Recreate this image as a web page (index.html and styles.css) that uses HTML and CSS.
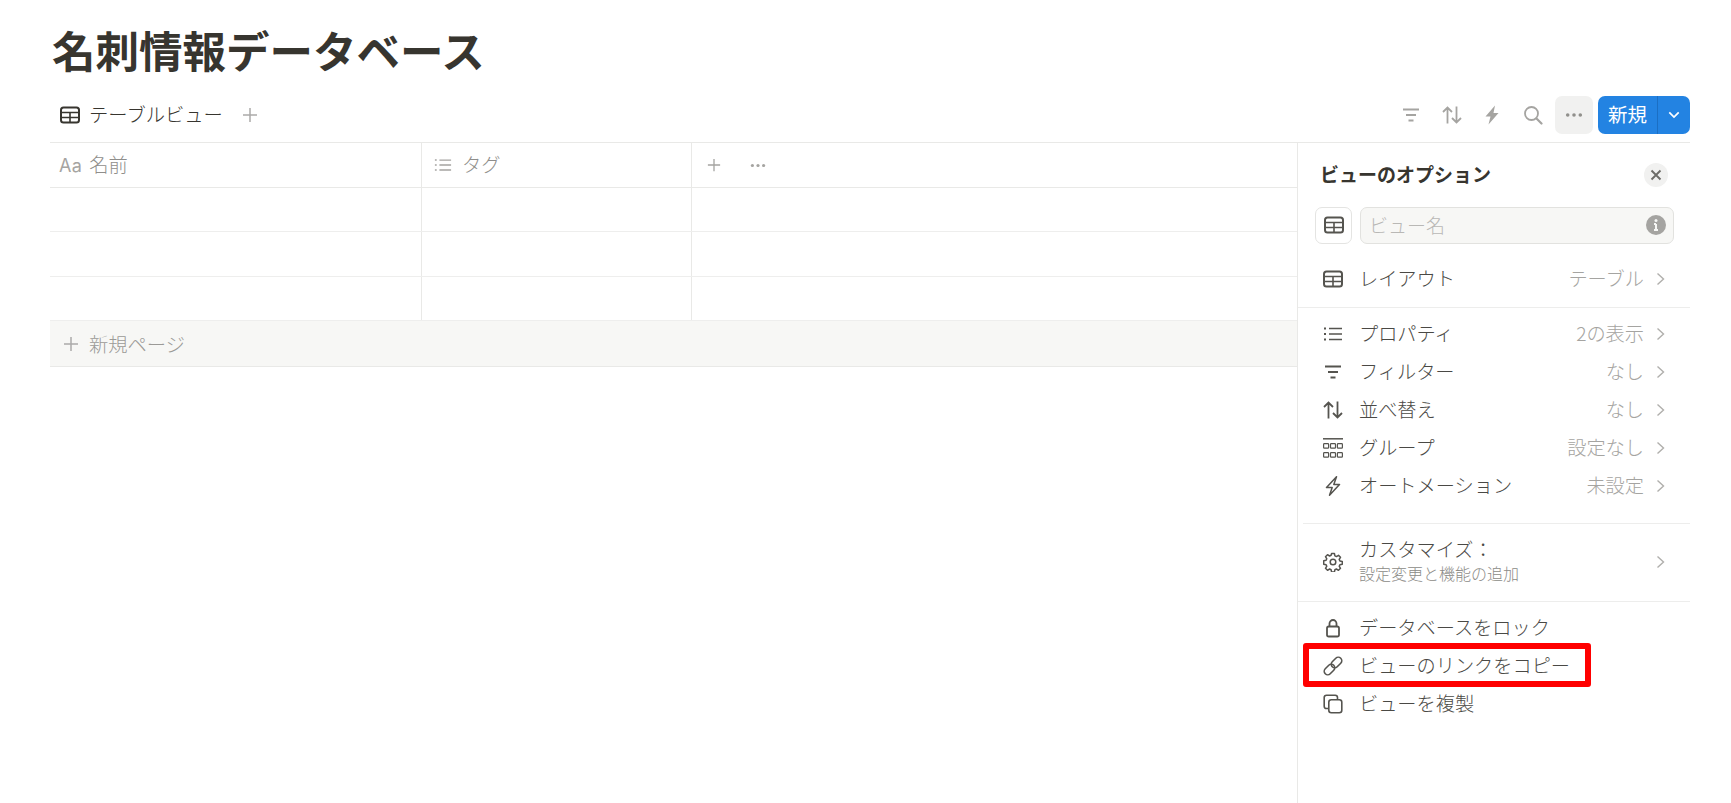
FILE: index.html
```html
<!DOCTYPE html>
<html lang="ja">
<head>
<meta charset="utf-8">
<title>名刺情報データベース</title>
<link rel="stylesheet" href="styles.css">
</head>
<body>
<svg class="defs" aria-hidden="true">
  <symbol id="i-table" viewBox="0 0 20 18"><rect x="1" y="1.500" width="18" height="15" rx="2.500" fill="none" stroke="currentColor" stroke-width="2"/><path d="M1 6.500h18M1 11.500h18M10 6.500v10" fill="none" stroke="currentColor" stroke-width="1.600"/></symbol>
  <symbol id="i-list" viewBox="0 0 20 20"><path d="M6 4.500h13M6 10h13M6 15.500h13" fill="none" stroke="currentColor" stroke-width="1.500"/><path d="M1 4.500h2M1 10h2M1 15.500h2" fill="none" stroke="currentColor" stroke-width="1.800"/></symbol>
  <symbol id="i-filter" viewBox="0 0 20 20"><path d="M2 4.500h16M5 10h10M7.500 15.500h5" fill="none" stroke="currentColor" stroke-width="1.900"/></symbol>
  <symbol id="i-sort" viewBox="0 0 20 20"><path d="M5.500 18.500V2.500M1 7l4.500-4.500L10 7M14.500 1.500v16M10 13l4.500 4.500L19 13" fill="none" stroke="currentColor" stroke-width="1.800"/></symbol>
  <symbol id="i-bolt" viewBox="0 0 20 20"><path d="M13 .5 3.500 11.500h5l-2 8 10-11.500h-5z" fill="currentColor"/></symbol>
  <symbol id="i-bolt-o" viewBox="0 0 20 20"><path d="M13.500.8 3.500 11.500h5.700L6.500 19.200l10-10.700h-5.700z" fill="none" stroke="currentColor" stroke-width="1.500" stroke-linejoin="round"/></symbol>
  <symbol id="i-search" viewBox="0 0 20 20"><circle cx="8.500" cy="8.500" r="6.500" fill="none" stroke="currentColor" stroke-width="1.800"/><path d="m13.500 13.500 5 5" fill="none" stroke="currentColor" stroke-width="2.200" stroke-linecap="round"/></symbol>
  <symbol id="i-dots" viewBox="0 0 20 6"><circle cx="3" cy="3" r="2" fill="currentColor"/><circle cx="10" cy="3" r="2" fill="currentColor"/><circle cx="17" cy="3" r="2" fill="currentColor"/></symbol>
  <symbol id="i-plus" viewBox="0 0 16 16"><path d="M8 1v14M1 8h14" fill="none" stroke="currentColor" stroke-width="1.500"/></symbol>
  <symbol id="i-chev" viewBox="0 0 9 14"><path d="m1.500 1.500 6 5.500-6 5.500" fill="none" stroke="currentColor" stroke-width="1.400"/></symbol>
  <symbol id="i-down" viewBox="0 0 14 9"><path d="m1.500 1.500 5.500 5.500 5.500-5.500" fill="none" stroke="currentColor" stroke-width="2"/></symbol>
  <symbol id="i-x" viewBox="0 0 12 12"><path d="m1.500 1.500 9 9M10.500 1.500l-9 9" fill="none" stroke="currentColor" stroke-width="1.900"/></symbol>
  <symbol id="i-group" viewBox="0 0 20 20"><path d="M0 .8h20" stroke="currentColor" stroke-width="1.500"/><g fill="none" stroke="currentColor" stroke-width="1.200"><rect x=".6" y="5.600" width="5" height="4.600" rx=".8"/><rect x="7.500" y="5.600" width="5" height="4.600" rx=".8"/><rect x="14.400" y="5.600" width="5" height="4.600" rx=".8"/><rect x=".6" y="14.600" width="5" height="4.600" rx=".8"/><rect x="7.500" y="14.600" width="5" height="4.600" rx=".8"/><rect x="14.400" y="14.600" width="5" height="4.600" rx=".8"/></g></symbol>
  <symbol id="i-gear" viewBox="0 0 20 20"><g fill="none" stroke="currentColor" stroke-width="1.500" stroke-linejoin="round"><circle cx="10" cy="10" r="2.800"/><path d="M8.600 1.500h2.800l.5 2.400 1.500.7 2.100-1.300 2 2-1.300 2.100.7 1.500 2.400.5v2.800l-2.400.5-.7 1.500 1.300 2.100-2 2-2.100-1.300-1.500.7-.5 2.400H8.600l-.5-2.400-1.500-.7-2.100 1.300-2-2 1.300-2.100-.7-1.500-2.400-.5V8.800l2.400-.5.7-1.500-1.300-2.100 2-2 2.100 1.300 1.500-.7z"/></g></symbol>
  <symbol id="i-lock" viewBox="0 0 20 20"><g fill="none" stroke="currentColor" stroke-width="1.800"><rect x="4" y="8.500" width="12" height="10" rx="1.800"/><path d="M6.500 8.500V5.500a3.500 3.500 0 0 1 7 0v3"/></g></symbol>
  <symbol id="i-link" viewBox="0 0 20 20"><g fill="none" stroke="currentColor" stroke-width="1.600"><rect x="7.500" y="3" width="12" height="7" rx="3.500" transform="rotate(-45 13.500 6.500)"/><rect x=".5" y="10" width="12" height="7" rx="3.500" transform="rotate(-45 6.500 13.500)"/></g></symbol>
  <symbol id="i-copy" viewBox="0 0 20 20"><g fill="none" stroke="currentColor" stroke-width="1.600"><rect x="5.800" y="5.800" width="13" height="13" rx="2.500"/><path d="M5 14.500H3.500A2.300 2.300 0 0 1 1.200 12.200V3.500A2.300 2.300 0 0 1 3.500 1.200h8.700a2.300 2.300 0 0 1 2.300 2.300V5"/></g></symbol>
  <symbol id="i-info" viewBox="0 0 20 20"><circle cx="10" cy="10" r="10" fill="currentColor"/><path d="M10 9v6M8 9h2M8 15h4" fill="none" stroke="#f7f7f5" stroke-width="2"/><circle cx="10" cy="5.500" r="1.500" fill="#f7f7f5"/></symbol>
</svg>

<div class="page">
  <h1 class="title">名刺情報データベース</h1>
  <div class="toolbar">
    <div class="tab">
      <svg class="ic-tab"><use href="#i-table"/></svg>
      <span>テーブルビュー</span>
    </div>
    <svg class="ic-add"><use href="#i-plus"/></svg>
    <div class="actions">
      <svg class="tool"><use href="#i-filter"/></svg>
      <svg class="tool"><use href="#i-sort"/></svg>
      <svg class="tool"><use href="#i-bolt"/></svg>
      <svg class="tool"><use href="#i-search"/></svg>
      <div class="more"><svg class="ic-dots"><use href="#i-dots"/></svg></div>
      <div class="new">
        <span class="new-label">新規</span>
        <span class="new-drop"><svg class="ic-down"><use href="#i-down"/></svg></span>
      </div>
    </div>
  </div>

  <div class="content">
    <div class="table">
      <div class="row head">
        <div class="cell c1"><span class="aa">Aa</span><span class="hlabel">名前</span></div>
        <div class="cell c2"><svg class="ic-col"><use href="#i-list"/></svg><span class="hlabel">タグ</span></div>
        <div class="cell c3"><svg class="ic-hplus"><use href="#i-plus"/></svg><svg class="ic-hdots"><use href="#i-dots"/></svg></div>
      </div>
      <div class="row"><div class="cell c1"></div><div class="cell c2"></div><div class="cell c3"></div></div>
      <div class="row"><div class="cell c1"></div><div class="cell c2"></div><div class="cell c3"></div></div>
      <div class="row"><div class="cell c1"></div><div class="cell c2"></div><div class="cell c3"></div></div>
      <div class="add-page"><svg class="ic-pplus"><use href="#i-plus"/></svg><span>新規ページ</span></div>
    </div>

    <aside class="panel">
      <div class="panel-head">
        <span class="panel-title">ビューのオプション</span>
        <span class="close"><svg class="ic-x"><use href="#i-x"/></svg></span>
      </div>
      <div class="name-row">
        <span class="icon-box"><svg class="ic-menu"><use href="#i-table"/></svg></span>
        <div class="name-input"><span class="placeholder">ビュー名</span><svg class="ic-info"><use href="#i-info"/></svg></div>
      </div>
      <div class="opt opt-layout">
        <svg class="ic-menu"><use href="#i-table"/></svg><span class="lbl">レイアウト</span><span class="val">テーブル</span><svg class="ic-chev"><use href="#i-chev"/></svg>
      </div>
      <div class="sep sep-a"></div>
      <div class="opt"><svg class="ic-menu"><use href="#i-list"/></svg><span class="lbl">プロパティ</span><span class="val">2の表示</span><svg class="ic-chev"><use href="#i-chev"/></svg></div>
      <div class="opt"><svg class="ic-menu"><use href="#i-filter"/></svg><span class="lbl">フィルター</span><span class="val">なし</span><svg class="ic-chev"><use href="#i-chev"/></svg></div>
      <div class="opt"><svg class="ic-menu"><use href="#i-sort"/></svg><span class="lbl">並べ替え</span><span class="val">なし</span><svg class="ic-chev"><use href="#i-chev"/></svg></div>
      <div class="opt"><svg class="ic-menu"><use href="#i-group"/></svg><span class="lbl">グループ</span><span class="val">設定なし</span><svg class="ic-chev"><use href="#i-chev"/></svg></div>
      <div class="opt"><svg class="ic-menu"><use href="#i-bolt-o"/></svg><span class="lbl">オートメーション</span><span class="val">未設定</span><svg class="ic-chev"><use href="#i-chev"/></svg></div>
      <div class="sep sep-b"></div>
      <div class="opt opt-custom">
        <svg class="ic-menu"><use href="#i-gear"/></svg>
        <div class="lbl custom-text"><span>カスタマイズ：</span><small>設定変更と機能の追加</small></div>
        <svg class="ic-chev"><use href="#i-chev"/></svg>
      </div>
      <div class="sep sep-c"></div>
      <div class="opt"><svg class="ic-menu"><use href="#i-lock"/></svg><span class="lbl">データベースをロック</span></div>
      <div class="opt"><svg class="ic-menu"><use href="#i-link"/></svg><span class="lbl">ビューのリンクをコピー</span></div>
      <div class="opt"><svg class="ic-menu"><use href="#i-copy"/></svg><span class="lbl">ビューを複製</span></div>
      <div class="highlight"></div>
    </aside>
  </div>
</div>
</body>
</html>
```
FILE: styles.css
```css
* { box-sizing: border-box; }
html, body { height: 100%; }
body {
  margin: 0;
  background: #fff;
  color: #37352f;
  font-family: "Noto Sans CJK JP", "Noto Sans", sans-serif;
  font-weight: 300;
  overflow: hidden;
}
.defs { position: absolute; width: 0; height: 0; }
.page { height: 803px; padding: 0 41px 0 50px; display: flex; flex-direction: column; }
.title {
  margin: 0;
  height: 96px;
  padding: 20px 0 0 2px;
  font-size: 43.500px;
  line-height: 60px;
  font-weight: 700;
  color: #37352f;
}
.toolbar {
  height: 47px;
  display: flex;
  align-items: center;
  border-bottom: 1px solid #e9e9e7;
  padding-bottom: 9px;
}
.tab { display: flex; align-items: center; gap: 6px; margin-left: 10px; font-size: 19.300px; line-height: 37px; }
.ic-tab { width: 20px; height: 18px; color: #37352f; margin-right: 3px; }
.ic-add { width: 16px; height: 16px; color: #acaba9; margin-left: 19px; }
.actions { margin-left: auto; display: flex; align-items: center; }
.tool { width: 20px; height: 20px; color: #a5a4a1; margin-right: 20.500px; }
.more {
  width: 38px; height: 38px; margin-left: -8px; margin-right: 5px;
  border-radius: 7px; background: #f1f1f0;
  display: flex; align-items: center; justify-content: center; color: #91908c;
}
.ic-dots { width: 18px; height: 6px; }
.new {
  width: 92px; height: 38px; border-radius: 7px; background: #2383e2; color: #fff;
  display: flex; align-items: center; font-weight: 400;
}
.new-label { width: 59px; text-align: center; font-size: 19.500px; line-height: 36px; padding-bottom: 2px; }
.new-drop { flex: 1; height: 38px; border-left: 1px solid #1b6fc4; display: flex; align-items: center; justify-content: center; }
.ic-down { width: 12px; height: 8px; }

.content { flex: 1; display: flex; min-height: 0; }
.table { flex: 1; min-width: 0; }
.row { display: flex; height: 44.400px; border-bottom: 1px solid #eeeeed; }
.row.head { border-bottom-color: #e9e9e7; color: #8f8e8b; height: 45px; font-size: 19.300px; }
.hlabel { padding-bottom: 3px; }
.cell { display: flex; align-items: center; border-right: 1px solid #e9e9e7; height: 100%; }
.c1 { width: 372px; padding-left: 9px; gap: 7px; }
.c2 { width: 270px; padding-left: 12px; gap: 10px; }
.c3 { flex: 1; border-right: 0; padding-left: 15px; }
.aa { font-family: "Inter", "Noto Sans", sans-serif; font-weight: 400; font-size: 18px; color: #a5a4a1; letter-spacing: .4px; }
.ic-col { width: 18px; height: 18px; color: #a5a4a1; }
.ic-hplus { width: 14px; height: 14px; color: #a5a4a1; }
.ic-hdots { width: 16px; height: 5px; color: #a5a4a1; margin-left: 29px; }
.add-page {
  height: 46px;
  display: flex; align-items: center; gap: 8px;
  padding-left: 13px;
  background: #f7f7f5;
  border-bottom: 1px solid #e9e9e7;
  font-size: 19.300px; color: #9b9a97;
}
.ic-pplus { width: 16px; height: 16px; color: #acaba9; margin-right: 2px; }

.panel {
  position: relative;
  width: 393px;
  flex: none;
  border-left: 1px solid #e9e9e7;
}
.panel-head { height: 63px; display: flex; align-items: center; padding: 0 22px; }
.panel-title { font-size: 19px; font-weight: 700; color: #37352f; flex: 1; padding-bottom: 2px; }
.close { width: 24px; height: 24px; border-radius: 50%; background: #f1f1f0; display: flex; align-items: center; justify-content: center; color: #6d6c68; }
.ic-x { width: 12px; height: 12px; }
.name-row { display: flex; align-items: center; gap: 8px; padding-left: 17px; height: 38px; }
.icon-box { width: 37px; height: 37px; border: 1px solid #e4e4e2; border-radius: 7px; display: flex; align-items: center; justify-content: center; color: #5f5e5a; }
.name-input {
  width: 314px; height: 37px;
  background: #f7f7f5; border: 1px solid #e2e2df; border-radius: 7px;
  padding: 0 7px 0 8px;
  display: flex; align-items: center; justify-content: space-between;
  font-size: 19px; color: #b9b8b5;
}
.placeholder { padding-bottom: 2px; }
.ic-info { width: 20px; height: 20px; color: #a5a4a1; }
.opt { display: flex; align-items: center; height: 38px; padding-left: 25px; font-size: 19.200px; color: #4a4945; }
.ic-menu { width: 20px; height: 20px; flex: none; color: #55544f; }
.lbl { margin-left: 16px; flex: 1; padding-bottom: 3px; }
.val { color: #a5a4a1; padding-bottom: 3px; }
.ic-chev { width: 9px; height: 14px; color: #b0afac; margin-left: 12px; margin-right: 25px; }
.opt-layout { margin-top: 16px; }
.sep { height: 1px; background: #ededec; }
.sep-a { margin: 9px 0 7px; }
.sep-b { margin: 18px 0 0 5px; }
.sep-c { margin: 1px 0 7px; }
.opt-custom { height: 76px; }
.custom-text { display: flex; flex-direction: column; line-height: 24px; }
.custom-text small { font-size: 16px; color: #8c8b87; }
.highlight {
  position: absolute;
  left: 5px; top: 500px;
  width: 288px; height: 44px;
  border: 6px solid #f00;
  border-radius: 3px;
}
```
